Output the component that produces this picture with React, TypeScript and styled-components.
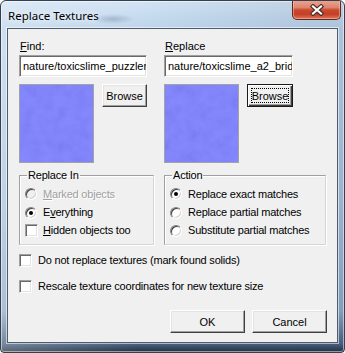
import React from 'react';
import styled, { createGlobalStyle } from 'styled-components';

const GlobalStyle = createGlobalStyle`
    html, body {
        margin: 0;
        padding: 0;
        background: #fff;
    }
    body {
        font-family: "Liberation Sans", Arial, sans-serif;
        font-size: 11px;
        color: #000;
    }
`;

const Window = styled.div`
    box-sizing: border-box;
    width: 345px;
    height: 353px;
    border: 1px solid #34404d;
    border-radius: 6px 6px 4px 4px;
    padding: 0 6px 9px;
    display: flex;
    flex-direction: column;
    background:
        radial-gradient(ellipse 22px 5px at 112px 18px, rgba(70, 90, 120, 0.28), transparent),
        linear-gradient(to right, rgba(255, 255, 255, 0.25), transparent 40%, rgba(40, 60, 90, 0.12)),
        linear-gradient(to bottom, #d3e3f4 0, #bed5ec 28px, #a9c3df 200px, #8fabc9 310px, #4a6280 343px, #17222f 353px);
    box-shadow: inset 0 0 0 1px rgba(255, 255, 255, 0.5);
    overflow: hidden;
`;

const TitleBar = styled.div`
    height: 28px;
    display: flex;
    justify-content: space-between;
    align-items: flex-start;
`;

const Title = styled.span`
    padding: 7px 0 0 1px;
    font-family: "Noto Sans", "Open Sans", sans-serif;
    font-size: 11.5px;
    line-height: 16px;
    color: #000;
    text-shadow: 0 0 6px rgba(255, 255, 255, 0.9), 0 0 10px rgba(255, 255, 255, 0.7);
`;

const CloseButton = styled.div`
    box-sizing: border-box;
    width: 49px;
    height: 20px;
    margin: -1px -3px 0 0;
    border: 1px solid #5c2a22;
    border-top: none;
    border-radius: 0 0 5px 5px;
    display: flex;
    align-items: center;
    justify-content: center;
    background: linear-gradient(to bottom, #eba895 0%, #e0836c 40%, #c94a30 52%, #c53f25 75%, #e07658 100%);
    box-shadow: inset 0 0 0 1px rgba(255, 210, 200, 0.45);
`;

const Client = styled.div`
    flex: 1;
    display: flex;
    flex-direction: column;
    border: 1px solid #4f5c6b;
    background: #f0f0f0;
    box-shadow: 0 0 0 1px rgba(255, 255, 255, 0.55);
    padding: 11px 10px 9px 11px;
`;

const TopRow = styled.div`
    display: flex;
    gap: 17px;
`;

const Column = styled.div<{ $w: number }>`
    width: ${(p) => p.$w}px;
    display: flex;
    flex-direction: column;
`;

const Label = styled.div`
    line-height: 13px;
    height: 13px;
    margin-bottom: 2px;
    padding-left: 1px;
`;

const Key = styled.span`
    text-decoration: underline;
`;

const TextBox = styled.input`
    box-sizing: border-box;
    width: 100%;
    height: 22px;
    margin: 0;
    padding: 0 0 0 3px;
    border: 1px solid;
    border-color: #a0a0a0 #fff #fff #a0a0a0;
    box-shadow: inset 1px 1px 0 #696969, inset -1px -1px 0 #e3e3e3;
    background: #fff;
    font-family: "Liberation Sans", Arial, sans-serif;
    font-size: 11px;
    color: #000;
    outline: none;
`;

const PreviewRow = styled.div`
    display: flex;
    align-items: flex-start;
    gap: 8px;
    margin-top: 7px;
`;

const Preview = styled.div`
    box-sizing: border-box;
    width: 75px;
    height: 79px;
    border: 1px solid #a3a3a3;
    background: #7c7fff;
    svg {
        display: block;
    }
`;

const Button = styled.button<{ $w: number; $default?: boolean }>`
    box-sizing: border-box;
    width: ${(p) => p.$w}px;
    height: 23px;
    margin: 0;
    padding: ${(p) => (p.$default ? '3px' : '0')};
    display: flex;
    align-items: stretch;
    justify-content: center;
    background: #f0f0f0;
    color: #000;
    font-family: "Liberation Sans", Arial, sans-serif;
    font-size: 11px;
    border: 1px solid;
    border-color: ${(p) => (p.$default ? '#1a1a1a' : '#fff #404040 #404040 #fff')};
    box-shadow: ${(p) =>
        p.$default
            ? 'inset 1px 1px 0 #fff, inset -1px -1px 0 #404040, inset -2px -2px 0 #a0a0a0'
            : 'inset -1px -1px 0 #a0a0a0, inset 1px 1px 0 #e3e3e3'};
    cursor: default;
`;

const ButtonText = styled.span<{ $focus?: boolean }>`
    flex: 1;
    display: flex;
    align-items: center;
    justify-content: center;
    border: 1px dotted ${(p) => (p.$focus ? '#000' : 'transparent')};
`;

const GroupRow = styled.div`
    display: flex;
    gap: 10px;
    margin-top: 6px;
`;

const Group = styled.fieldset<{ $w: number }>`
    box-sizing: border-box;
    width: ${(p) => p.$w}px;
    margin: 0;
    padding: 3px 0 5px 5px;
    border: 1px solid #a0a0a0;
    border-right-color: #d5d5d5;
    border-bottom-color: #d5d5d5;
    box-shadow: inset 1px 1px 0 #fff, 1px 1px 0 #fff;
    min-width: 0;
`;

const Legend = styled.legend`
    margin-left: 2px;
    padding: 0 1px;
    line-height: 13px;
    height: 13px;
    letter-spacing: -0.2px;
`;

const OptionRow = styled.div<{ $h: number; $gap: number }>`
    height: ${(p) => p.$h}px;
    display: flex;
    align-items: center;
    gap: ${(p) => p.$gap}px;
    line-height: 13px;
`;

const OptionText = styled.span<{ $disabled?: boolean }>`
    color: ${(p) => (p.$disabled ? '#a0a0a0' : '#000')};
    text-shadow: ${(p) => (p.$disabled ? '1px 1px 0 #fff' : 'none')};
    white-space: nowrap;
    letter-spacing: -0.2px;
`;

const Radio = styled.span<{ $checked?: boolean; $disabled?: boolean }>`
    box-sizing: border-box;
    width: 12px;
    height: 12px;
    flex: none;
    border-radius: 50%;
    border: 1px solid;
    border-color: #808080 #fff #fff #808080;
    box-shadow: inset 1px 1px 0 #404040, inset -1px -1px 0 #d4d0c8;
    background: ${(p) => (p.$disabled ? '#f0f0f0' : '#fff')};
    display: flex;
    align-items: center;
    justify-content: center;
    &::after {
        content: '';
        width: 4px;
        height: 4px;
        border-radius: 50%;
        background: ${(p) => (p.$checked ? '#000' : 'transparent')};
    }
`;

const Check = styled.span`
    box-sizing: border-box;
    width: 13px;
    height: 13px;
    flex: none;
    border: 1px solid;
    border-color: #a0a0a0 #fff #fff #a0a0a0;
    box-shadow: inset 1px 1px 0 #696969, inset -1px -1px 0 #e3e3e3;
    background: #fff;
`;

const OptionsBlock = styled.div`
    display: flex;
    flex-direction: column;
    gap: 10px;
    margin-top: 7px;
`;

const ButtonRow = styled.div`
    display: flex;
    justify-content: flex-end;
    gap: 7px;
    margin-top: 16px;
`;

function Texture({ seed }: { seed: number }) {
    return (
        <Preview>
            <svg width="73" height="77" viewBox="0 0 73 77">
                <defs>
                    <filter id={`tex${seed}`} x="0" y="0" width="100%" height="100%">
                        <feTurbulence type="fractalNoise" baseFrequency="0.09" numOctaves={3} seed={seed} />
                        <feColorMatrix
                            type="matrix"
                            values="1 0 0 0 0  1 0 0 0 0  1 0 0 0 0  0 0 0 0 0.09"
                        />
                    </filter>
                </defs>
                <rect width="73" height="77" fill="#7c7fff" />
                <rect width="73" height="77" filter={`url(#tex${seed})`} />
            </svg>
        </Preview>
    );
}

function App() {
    return (
        <>
            <GlobalStyle />
            <Window>
                <TitleBar>
                    <Title>Replace Textures</Title>
                    <CloseButton>
                        <svg width="14" height="12" viewBox="0 0 14 12">
                            <path d="M3 2.5 L11 9.5 M11 2.5 L3 9.5" stroke="#4a2e28" strokeWidth="4.4" strokeLinecap="square" />
                            <path d="M3 2.5 L11 9.5 M11 2.5 L3 9.5" stroke="#fff" strokeWidth="2.2" strokeLinecap="square" />
                        </svg>
                    </CloseButton>
                </TitleBar>
                <Client>
                    <TopRow>
                        <Column $w={128}>
                            <Label>
                                <Key>F</Key>ind:
                            </Label>
                            <TextBox readOnly value="nature/toxicslime_puzzlemaker" />
                            <PreviewRow>
                                <Texture seed={3} />
                                <Button $w={45}>
                                    <ButtonText>Browse</ButtonText>
                                </Button>
                            </PreviewRow>
                        </Column>
                        <Column $w={129}>
                            <Label>
                                <Key>R</Key>eplace
                            </Label>
                            <TextBox readOnly value="nature/toxicslime_a2_bridge" />
                            <PreviewRow>
                                <Texture seed={11} />
                                <Button $w={46} $default>
                                    <ButtonText $focus>Browse</ButtonText>
                                </Button>
                            </PreviewRow>
                        </Column>
                    </TopRow>
                    <GroupRow>
                        <Group $w={135}>
                            <Legend>Replace In</Legend>
                            <OptionRow $h={18} $gap={6}>
                                <Radio $disabled />
                                <OptionText $disabled>
                                    <Key>M</Key>arked objects
                                </OptionText>
                            </OptionRow>
                            <OptionRow $h={19} $gap={6}>
                                <Radio $checked />
                                <OptionText>
                                    E<Key>v</Key>erything
                                </OptionText>
                            </OptionRow>
                            <OptionRow $h={17} $gap={5}>
                                <Check />
                                <OptionText>
                                    <Key>H</Key>idden objects too
                                </OptionText>
                            </OptionRow>
                        </Group>
                        <Group $w={162}>
                            <Legend>Action</Legend>
                            <OptionRow $h={18} $gap={6}>
                                <Radio $checked />
                                <OptionText>Replace exact matches</OptionText>
                            </OptionRow>
                            <OptionRow $h={19} $gap={6}>
                                <Radio />
                                <OptionText>Replace partial matches</OptionText>
                            </OptionRow>
                            <OptionRow $h={17} $gap={6}>
                                <Radio />
                                <OptionText>Substitute partial matches</OptionText>
                            </OptionRow>
                        </Group>
                    </GroupRow>
                    <OptionsBlock>
                        <OptionRow $h={16} $gap={6}>
                            <Check />
                            <OptionText>Do not replace textures (mark found solids)</OptionText>
                        </OptionRow>
                        <OptionRow $h={16} $gap={6}>
                            <Check />
                            <OptionText>Rescale texture coordinates for new texture size</OptionText>
                        </OptionRow>
                    </OptionsBlock>
                    <ButtonRow>
                        <Button $w={75}>
                            <ButtonText>OK</ButtonText>
                        </Button>
                        <Button $w={75}>
                            <ButtonText>Cancel</ButtonText>
                        </Button>
                    </ButtonRow>
                </Client>
            </Window>
        </>
    );
}

export default App;
